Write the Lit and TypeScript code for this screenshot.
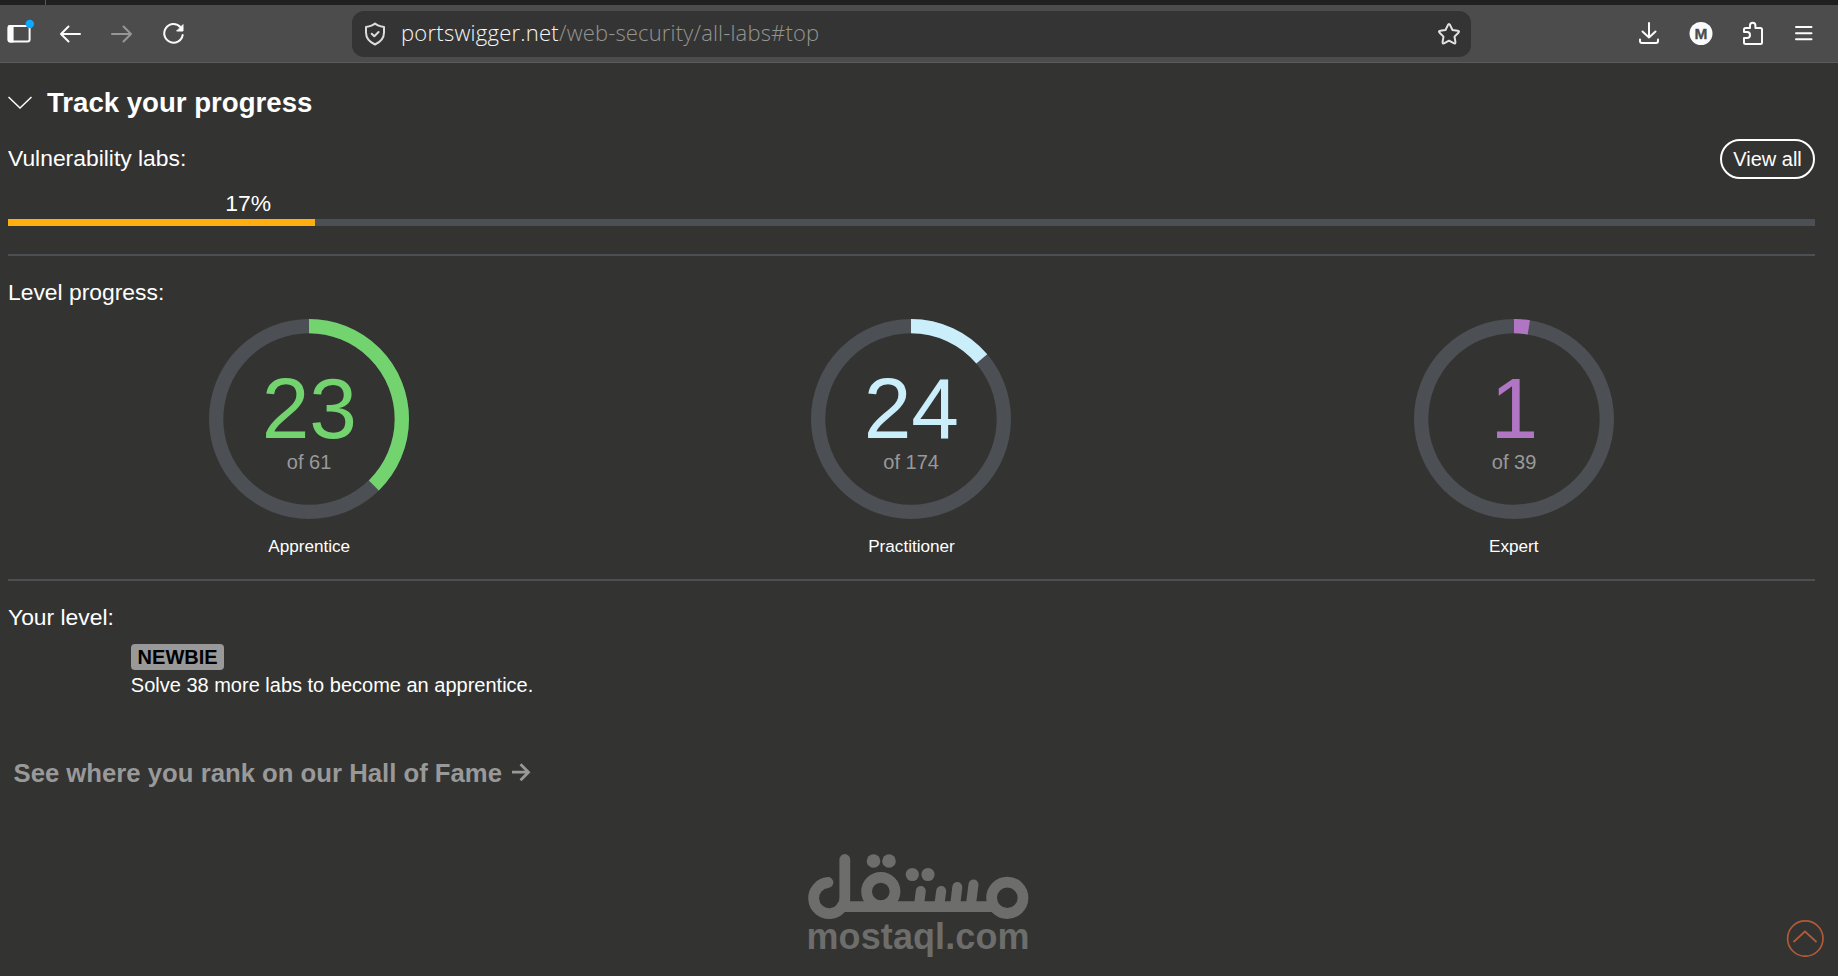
import { LitElement, html, css } from "lit";
import { customElement, property } from "lit/decorators.js";

@customElement("level-ring")
class LevelRing extends LitElement {
  @property({ type: Number }) solved = 0;
  @property({ type: Number }) total = 1;
  @property() label = "";
  @property() tone = "";

  static styles = css`
    :host { display: flex; flex-direction: column; align-items: center; }
    .ring { display: block; width: 200px; height: 200px; }
    .track { fill: none; stroke: #4c4f54; stroke-width: 14.3; }
    .arc { fill: none; stroke-width: 14.3; }
    .count { font-size: 85.7px; text-anchor: middle; }
    .of { font-size: 20px; text-anchor: middle; fill: #999; }
    .label { margin: 16px 0 1px; font-size: 17.14px; line-height: 22px; color: #fff; }
    .green { --tone: #72d36f; }
    .blue { --tone: #cbeefb; }
    .purple { --tone: #b076c3; }
    .arc { stroke: var(--tone); }
    .count { fill: var(--tone); }
  `;

  render() {
    const share = (this.solved / this.total) * 100;
    return html`
      <svg class="ring ${this.tone}" viewBox="0 0 200 200">
        <circle class="track" cx="100" cy="100" r="92.850"></circle>
        <circle class="arc" cx="100" cy="100" r="92.850" pathLength="100"
          stroke-dasharray="${share} 100" transform="rotate(-90 100 100)"></circle>
        <text class="count" x="100.300" y="119">${this.solved}</text>
        <text class="of" x="100.100" y="150">of ${this.total}</text>
      </svg>
      <span class="label">${this.label}</span>`;
  }
}

@customElement("browser-bar")
class BrowserBar extends LitElement {
  static styles = css`
    :host { display: block; }
    .tabs { height: 5px; background: #202020; display: flex; }
    .tab { width: 45px; border-right: 1px solid #5a5a5a; }
    .bar { display: flex; align-items: center; height: 57px; background: #4c4c4c; border-bottom: 1px solid #5b5b5e; }
    .left { display: flex; align-items: center; width: 352px; gap: 19.5px; }
    .left svg:first-child { margin-left: 3.4px; }
    svg { display: block; fill: none; stroke: #fbfbfe; stroke-width: 2; stroke-linecap: round; stroke-linejoin: round; }
    .dim { stroke: #969696; }
    .url { display: flex; align-items: center; width: 1119px; height: 46px; border-radius: 12px; background: #343434; }
    .shield { margin-left: 11px; stroke: #dcdcdc; }
    .address { flex: 1; margin: -4px 0 0 14px; font: 300 22px/30px "Open Sans", "Noto Sans", sans-serif; color: #959590; white-space: pre; letter-spacing: 0.16px; }
    .host { color: #f6f6f6; letter-spacing: 0.25px; }
    .star { margin-right: 9.500px; stroke: #e2e2e2; stroke-width: 2; }
    .right { display: flex; align-items: center; gap: 27.7px; margin-left: 166px; }
    .badge { fill: #fbfbfe; stroke: none; }
    .badge-m { font: bold 15.500px "Liberation Sans", sans-serif; fill: #4c4c4c; stroke: #4c4c4c; stroke-width: .3; text-anchor: middle; }
    .notice { fill: #0aabff; stroke: none; }
    .pane { fill: #fbfbfe; stroke: none; }
    .solid { fill: #fbfbfe; }
  `;

  render() {
    return html`
      <div class="tabs"><div class="tab"></div></div>
      <div class="bar">
        <div class="left">
          <svg width="32" height="32" viewBox="0 0 32 32"><rect x="5.600" y="8" width="21" height="15.500" rx="2"></rect><path class="pane" d="M6.600 7h4v17.500h-4q-2 0-2-2V9q0-2 2-2z"></path><circle class="notice" cx="26.800" cy="6" r="4.200"></circle></svg>
          <svg width="32" height="32" viewBox="0 0 32 32"><path d="M25 16H6M13.500 8.500L6 16L13.500 23.500"></path></svg>
          <svg class="dim" width="32" height="32" viewBox="0 0 32 32"><path d="M6 16h19M17.500 8.500L25 16L17.500 23.500"></path></svg>
          <svg width="32" height="32" viewBox="0 0 32 32"><path d="M22.600 9.300A9.300 9.300 0 1 0 24.700 17"></path><path class="solid" stroke-width="1" d="M25 7v6h-6z"></path></svg>
        </div>
        <div class="url">
          <svg class="shield" width="24" height="26" viewBox="0 0 24 26"><path d="M12 2.500C14.500 4.800 18 5.500 21 6v5.500c0 5.500-3.500 9.500-9 12c-5.500-2.500-9-6.500-9-12V6C6 5.500 9.500 4.800 12 2.500zM8.700 12.700l2.600 2.600l4.300-4.300"></path></svg>
          <div class="address"><span class="host">portswigger.net</span>/web-security/all-labs#top</div>
          <svg class="star" width="26" height="26" viewBox="0 0 26 26"><path d="M11.900 4.100q1.100-2 2.200 0l2.400 4.900l5.200 .7q2.200.5.700 2l-3.900 3.900l.9 5.300q.2 2.300-1.800 1.300L13 19.700l-4.600 2.500q-2 1-1.800-1.300l.9-5.300L3.600 11.700q-1.500-1.500.7-2l5.200-.7z"></path></svg>
        </div>
        <div class="right">
          <svg width="24" height="26" viewBox="0 0 24 26"><path d="M12 2v14.500M5.500 10.500L12 16.500l6.500-6M3 18.500v1.500q0 2 2 2h14q2 0 2-2v-1.500"></path></svg>
          <svg width="24" height="26" viewBox="0 0 24 26"><circle class="badge" cx="12" cy="12.500" r="11.500"></circle><text class="badge-m" x="12" y="18.200">M</text></svg>
          <svg width="24" height="26" viewBox="0 0 24 26"><path d="M4 11V8.500q0-1.500 1.500-1.500H10V4.500a2.700 2.700 0 0 1 5.400 0V7h5Q22 7 22 8.500V21.500q0 1.500-1.500 1.500h-15Q4 23 4 21.500v-4.500h3a3 3 0 0 0 0-6z"></path></svg>
          <svg width="24" height="26" viewBox="0 0 24 26"><path d="M4 6h15.500M4 12.200h15.500M4 18.200h15.500"></path></svg>
        </div>
      </div>`;
  }
}

@customElement("app-root")
class AppRoot extends LitElement {
  static styles = css`
    :host { display: flex; flex-direction: column; position: relative; height: 976px; overflow: hidden; background: #333332; color: #fff; font-family: "Liberation Sans", Arial, sans-serif; }
    .page { padding: 0 23px 0 8px; display: flex; flex-direction: column; }
    .title { display: flex; align-items: center; gap: 15px; margin-top: 24px; height: 32px; }
    .title h1 { margin: 0; font-size: 27.6px; line-height: 32px; }
    svg { display: block; fill: none; }
    .chevron { stroke: #fff; stroke-width: 1.5; }
    .row { display: flex; justify-content: space-between; align-items: center; margin-top: 20px; height: 40px; }
    .caption { font-size: 22.86px; line-height: 24px; padding-bottom: 2px; }
    .view { box-sizing: border-box; width: 95px; height: 40px; border: 2px solid #fff; border-radius: 20px; font-size: 20px; line-height: 36px; text-align: center; }
    .percent { box-sizing: border-box; width: 307px; padding-right: 44px; margin-top: 12px; height: 28px; font-size: 22.86px; line-height: 24px; text-align: right; }
    .meter { height: 7px; background: #4c4f54; }
    .fill { height: 7px; background: #ffae12; }
    .rule { height: 2px; background: #4c4f54; }
    .rule.first { margin: 28px 0 24px; }
    .levels { display: grid; grid-template-columns: repeat(3, 1fr); margin-top: 13px; }
    .rule.second { margin: 21px 0 24px; }
    .rank { margin: 13px 0 0 122.800px; display: flex; flex-direction: column; align-items: flex-start; font-size: 20px; }
    .newbie { box-sizing: border-box; width: 93px; height: 26px; padding-left: .6px; border-radius: 4px; background: #999; color: #000; font-weight: bold; line-height: 27px; text-align: center; }
    .hint { line-height: 24px; margin-top: 3px; }
    .fame { display: flex; align-items: center; gap: 9px; margin: 60px 0 0 5.500px; font-size: 25.710px; line-height: 32px; font-weight: bold; color: #999; }
    .fame svg { stroke: #999; stroke-width: 2.800; }
    .watermark { position: absolute; left: 800px; top: 846px; }
    .mark { stroke: #6d6d6c; stroke-width: 10.800; stroke-linecap: round; }
    .bars { stroke-width: 10; }
    .dots { fill: #6d6d6c; stroke: none; }
    .domain { font: bold 36px "Liberation Sans", Arial, sans-serif; fill: #6d6d6c; }
    .totop { position: absolute; left: 1786px; top: 919px; stroke: #b05b38; stroke-width: 1.700; }
  `;

  levels = [
    { solved: 23, total: 61, label: "Apprentice", tone: "green" },
    { solved: 24, total: 174, label: "Practitioner", tone: "blue" },
    { solved: 1, total: 39, label: "Expert", tone: "purple" },
  ];

  render() {
    const percent = 17;
    return html`
      <browser-bar></browser-bar>
      <main class="page">
        <div class="title">
          <svg class="chevron" width="24" height="14" viewBox="0 0 24 14"><path d="M.5 1L12 12L23.500 1"></path></svg>
          <h1>Track your progress</h1>
        </div>
        <div class="row"><span class="caption">Vulnerability labs:</span><span class="view">View all</span></div>
        <div class="percent">${percent}%</div>
        <div class="meter"><div class="fill" style="width:${percent}%"></div></div>
        <div class="rule first"></div>
        <div class="caption">Level progress:</div>
        <div class="levels">
          ${this.levels.map((l) => html`<level-ring .solved=${l.solved} .total=${l.total} .label=${l.label} .tone=${l.tone}></level-ring>`)}
        </div>
        <div class="rule second"></div>
        <div class="caption">Your level:</div>
        <div class="rank">
          <span class="newbie">NEWBIE</span>
          <span class="hint">Solve 38 more labs to become an apprentice.</span>
        </div>
        <div class="fame">See where you rank on our Hall of Fame
          <svg width="20" height="20" viewBox="0 0 20 20"><path d="M1 9.200h16M9.500 1.200l8 8l-8 8"></path></svg>
        </div>
      </main>
      <svg class="watermark" width="236" height="118" viewBox="800.500 846 236 118">
        <g class="mark">
          <path d="M828.500 882.500A15.600 15.600 0 1 0 845.300 897V859.500"></path>
          <path d="M842 906.700H994"></path>
          <circle cx="881.300" cy="891.500" r="14.200"></circle>
          <circle cx="1007.800" cy="897.800" r="15.700"></circle>
          <path class="bars" d="M921.300 891L919.700 904M941.700 891L940 904M957.800 887L955.800 904M974 884.500L971.500 904"></path>
        </g>
        <g class="dots">
          <circle cx="874" cy="861" r="6.800"></circle><circle cx="889.500" cy="861" r="6.800"></circle>
          <circle cx="912.800" cy="874.500" r="6.600"></circle><circle cx="928.500" cy="874.500" r="6.600"></circle>
        </g>
        <text class="domain" x="807" y="948.500" textLength="223">mostaql.com</text>
      </svg>
      <svg class="totop" width="38" height="38" viewBox="0 0 38 38"><circle cx="19.300" cy="19.500" r="17.700"></circle><path d="M7.500 23L19 12.500L30.500 23"></path></svg>`;
  }
}
